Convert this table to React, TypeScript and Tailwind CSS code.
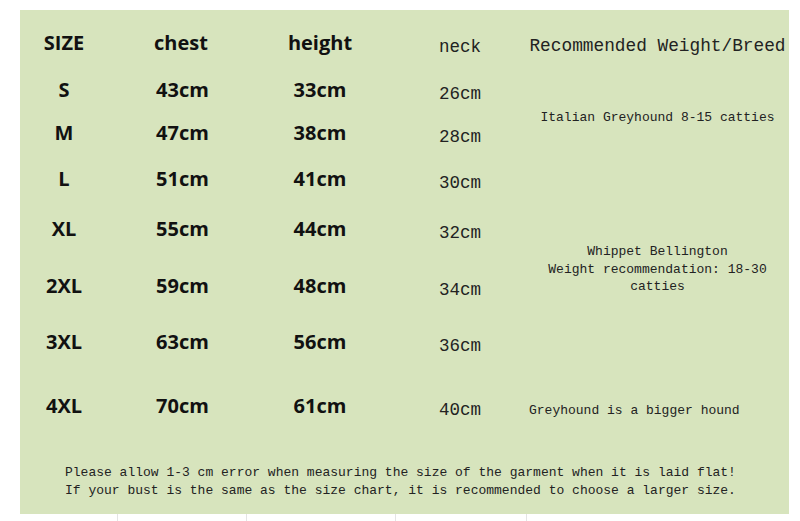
import React from 'react';

interface SizeRow {
  size: string;
  chest: string;
  height: string;
  neck: string;
}

const rows: SizeRow[] = [
  { size: 'S', chest: '43cm', height: '33cm', neck: '26cm' },
  { size: 'M', chest: '47cm', height: '38cm', neck: '28cm' },
  { size: 'L', chest: '51cm', height: '41cm', neck: '30cm' },
  { size: 'XL', chest: '55cm', height: '44cm', neck: '32cm' },
  { size: '2XL', chest: '59cm', height: '48cm', neck: '34cm' },
  { size: '3XL', chest: '63cm', height: '56cm', neck: '36cm' },
  { size: '4XL', chest: '70cm', height: '61cm', neck: '40cm' },
];

const sans = "font-['Open_Sans',sans-serif] font-bold text-[20px] leading-[24px] text-[#111]";
const mono = "font-['Liberation_Mono',monospace] text-[#222]";

export default function App() {
  return (
    <div className="w-[800px] h-[521px] bg-white overflow-hidden pt-[10px]">
      <div className="ml-[20px] w-[769px] h-[504px] bg-[#d7e4bd] pt-[21px]">
        <div className="grid grid-cols-[88px_146px_132px_140px_263px] grid-rows-[47px_43px_46px_50px_57px_56px_64px_40px]">
          <div className={`${sans} text-center`}>SIZE</div>
          <div className={`${sans} text-center`}>chest</div>
          <div className={`${sans} text-center`}>height</div>
          <div className={`${mono} text-[17.5px] leading-[24px] pl-[53px] pt-[4px]`}>neck</div>
          <div className={`${mono} text-[17.8px] leading-[24px] text-center pt-[3px]`}>
            Recommended Weight/Breed
          </div>

          {rows.map((r, i) => (
            <React.Fragment key={r.size}>
              <div className={`${sans} text-center`} style={{ gridRow: i + 2, gridColumn: 1 }}>
                {r.size}
              </div>
              <div className={`${sans} text-center pl-[3px]`} style={{ gridRow: i + 2, gridColumn: 2 }}>
                {r.chest}
              </div>
              <div className={`${sans} text-center`} style={{ gridRow: i + 2, gridColumn: 3 }}>
                {r.height}
              </div>
              <div
                className={`${mono} text-[17.5px] leading-[24px] pl-[53px] pt-[4px] text-[#2b2b2b]`}
                style={{ gridRow: i + 2, gridColumn: 4 }}
              >
                {r.neck}
              </div>
            </React.Fragment>
          ))}

          <div className={`${mono} text-[13px] leading-[17.5px] text-center pt-[31px] row-start-2 row-span-2 col-start-5`}>
            Italian Greyhound 8-15 catties
          </div>
          <div className={`${mono} text-[13px] leading-[17.5px] text-center pt-[26px] row-start-5 row-span-3 col-start-5`}>
            Whippet Bellington
            <br />
            Weight recommendation: 18-30
            <br />
            catties
          </div>
          <div className={`${mono} text-[13px] leading-[18px] pl-[3px] pt-[8px] row-start-8 col-start-5`}>
            Greyhound is a bigger hound
          </div>
        </div>

        <div className={`${mono} mt-[30px] ml-[45px] text-[13px] leading-[18px]`}>
          <p>Please allow 1-3 cm error when measuring the size of the garment when it is laid flat!</p>
          <p>If your bust is the same as the size chart, it is recommended to choose a larger size.</p>
        </div>
      </div>

      <div className="flex h-[7px] ml-[20px]">
        <div className="w-[98px] border-r border-[#e4e4e4]" />
        <div className="w-[129px] border-r border-[#e4e4e4]" />
        <div className="w-[149px] border-r border-[#e4e4e4]" />
        <div className="w-[131px] border-r border-[#e4e4e4]" />
      </div>
    </div>
  );
}
